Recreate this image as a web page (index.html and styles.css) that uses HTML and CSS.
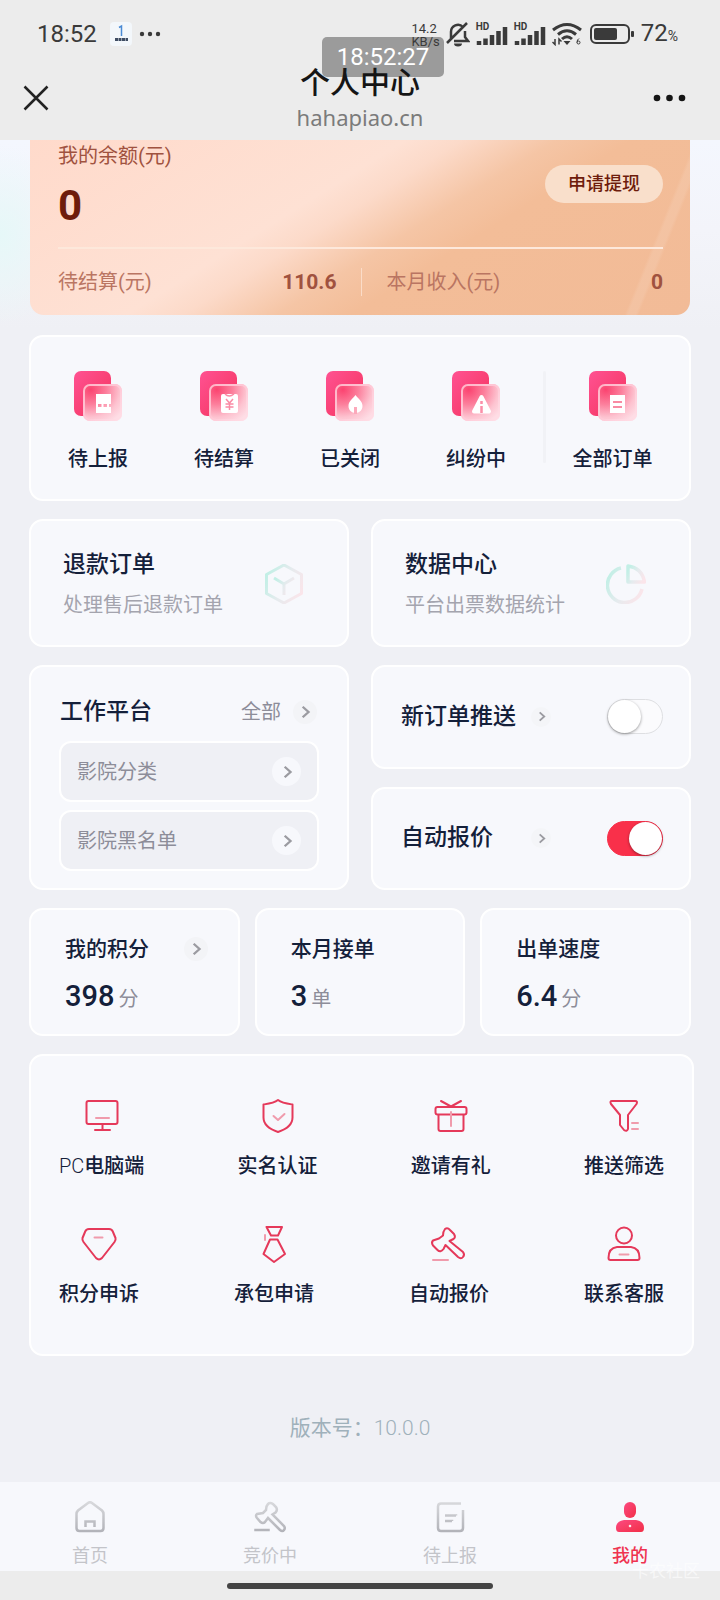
FILE: index.html
```html
<!DOCTYPE html>
<html lang="zh-CN">
<head>
<meta charset="utf-8">
<meta name="viewport" content="width=device-width, initial-scale=1">
<title>个人中心</title>
<link rel="stylesheet" href="styles.css">
</head>
<body>
<svg class="defs" width="0" height="0" aria-hidden="true">
  <defs>
    <linearGradient id="back" x1="0" y1="0" x2="1" y2="1"><stop offset="0" stop-color="#ff5292"/><stop offset="1" stop-color="#f4335c"/></linearGradient>
    <radialGradient id="front" cx="0.2" cy="0.15" r="1"><stop offset="0" stop-color="#fb4370"/><stop offset="0.4" stop-color="#fc7f9c"/><stop offset="0.75" stop-color="#fdc3d0"/><stop offset="1" stop-color="#fedde5"/></radialGradient>
    <linearGradient id="edge" x1="0" y1="0" x2="1" y2="1"><stop offset="0" stop-color="#ffb4c7"/><stop offset="1" stop-color="#ffdfe7"/></linearGradient>
    <linearGradient id="mint" x1="0" y1="0.3" x2="1" y2="0.8"><stop offset="0" stop-color="#c3efe6"/><stop offset="0.5" stop-color="#e6ebee"/><stop offset="1" stop-color="#fbe5ea"/></linearGradient>
    <linearGradient id="grey" gradientUnits="userSpaceOnUse" x1="0" y1="0" x2="0" y2="32"><stop offset="0" stop-color="#d9dadd"/><stop offset="1" stop-color="#b0b1b7"/></linearGradient>
    <linearGradient id="pink" x1="0" y1="0" x2="1" y2="1"><stop offset="0" stop-color="#fc4a82"/><stop offset="1" stop-color="#f22f46"/></linearGradient>
  </defs>
  <symbol id="chevron" viewBox="0 0 12 12"><path d="M4 1.500l5 4.500-5 4.500" fill="none" stroke="#9b9ba1" stroke-width="2"/></symbol>
  <symbol id="tile" viewBox="0 0 50 50">
    <rect x="1" width="37" height="45" rx="7" fill="url(#back)"/>
    <rect x="10" y="13" width="39" height="37" rx="7" fill="url(#front)"/>
    <rect x="11" y="14" width="37" height="35" rx="6" fill="none" stroke="url(#edge)" stroke-width="2"/>
  </symbol>
  <symbol id="signal" viewBox="0 0 32 22">
    <path d="M3 17v4M9.500 14.500V21M16 11V21M22.500 7V21M29 3V21" stroke="#3a3a3a" stroke-width="4.500"/>
  </symbol>
</svg>

<header class="top">
  <div class="status">
    <time class="clock">18:52</time>
    <svg width="24" height="24" viewBox="0 0 24 24" aria-hidden="true"><rect x="1" width="22" height="24" rx="4" fill="#f3f7fb"/><path d="M10 5.500l2.500-1.500v10" fill="none" stroke="#4a8ad4" stroke-width="1.500"/><path d="M6 17.500h13" stroke="#3f4d63" stroke-width="3" stroke-dasharray="3 .5"/></svg>
    <svg width="22" height="6" viewBox="0 0 22 6" aria-hidden="true"><g fill="#3a3a3a"><circle cx="3" cy="3" r="2.200"/><circle cx="11" cy="3" r="2.200"/><circle cx="19" cy="3" r="2.200"/></g></svg>
    <span class="speed">14.2<br>KB/s</span>
    <svg width="24" height="26" viewBox="0 0 24 26" aria-hidden="true"><g fill="none" stroke="#3a3a3a" stroke-width="2.500"><path d="M5 18V11a7 7 0 0 1 12-5M19 10v6l3 4H8M1 22L21 2"/></g><path d="M8 22.500h8a4 3 0 0 1-8 0z" fill="#3a3a3a"/></svg>
    <span class="cell"><b>HD</b><svg width="32" height="22" aria-hidden="true"><use href="#signal"/></svg></span>
    <span class="cell"><b>HD</b><svg width="32" height="22" aria-hidden="true"><use href="#signal"/></svg></span>
    <svg width="30" height="24" viewBox="0 0 30 24" aria-hidden="true"><g fill="none" stroke="#3a3a3a" stroke-width="3"><path d="M1 8Q15-3 29 8M6 12.500Q15 5 24 12.500M10 17Q15 12.500 20 17"/></g><path d="M11.500 19h7L15 23z" fill="#3a3a3a"/><path d="M3 17v5.500L.5 20M7 22.500V17l2.500 2.500" fill="none" stroke="#3a3a3a" stroke-width="1.500"/><circle cx="26.500" cy="20.500" r="1.500" fill="none" stroke="#3a3a3a"/><path d="M25 20.500q0-3 2-4" fill="none" stroke="#3a3a3a"/></svg>
    <svg class="cellpack" width="45" height="20" viewBox="0 0 45 20" aria-hidden="true"><rect x="1" y="1" width="38" height="18" rx="5" fill="none" stroke="#3a3a3a" stroke-width="2"/><rect x="4" y="4" width="23" height="12" rx="2" fill="#3a3a3a"/><rect x="41" y="7" width="3" height="6" rx="1" fill="#3a3a3a"/></svg>
    <span class="battery">72<small>%</small></span>
  </div>
  <div class="overlay-clock">18:52:27</div>
  <div class="navbar">
    <button class="icon-btn" aria-label="关闭"><svg width="26" height="26" viewBox="0 0 26 26"><path d="M1.500 1.500l23 23M24.500 1.500l-23 23" stroke="#222" stroke-width="2.500"/></svg></button>
    <div class="heading"><h1>个人中心</h1><p>hahapiao.cn</p></div>
    <button class="icon-btn more" aria-label="更多"><svg width="34" height="8" viewBox="0 0 34 8"><g fill="#151515"><circle cx="4" cy="4" r="3.300"/><circle cx="16.500" cy="4" r="3.300"/><circle cx="29" cy="4" r="3.300"/></g></svg></button>
  </div>
</header>

<main class="page">
  <section class="balance">
    <div class="balance-main">
      <div><p class="balance-label">我的余额(元)</p><p class="balance-sum">0</p></div>
      <button class="withdraw">申请提现</button>
    </div>
    <dl class="balance-sub">
      <div><dt>待结算(元)</dt><dd>110.6</dd></div>
      <div><dt>本月收入(元)</dt><dd>0</dd></div>
    </dl>
  </section>

  <nav class="card orders" aria-label="订单">
    <a href="#"><svg width="50" height="50"><use href="#tile"/><path d="M23 23h15v10H23zM23 36h15v6H23z" fill="#fff"/><path d="M23 34.500h15" stroke="#fff" stroke-width="3" stroke-dasharray="2 3.500"/></svg>待上报</a>
    <a href="#"><svg width="50" height="50"><use href="#tile"/><rect x="22" y="23" width="17" height="19" rx="2" fill="#fff"/><path d="M26 23q4 4 9 0M27 28l3.500 4 3.500-4M26.500 33h8M26.500 36h8M30.500 32v7" fill="none" stroke="#fa8ba5" stroke-width="1.500"/></svg>待结算</a>
    <a href="#"><svg width="50" height="50"><use href="#tile"/><path d="M30.500 24c3 4 7 6 7 11 0 4-3 7-7 7s-7-3-7-7c0-5 4-7 7-11z" fill="#fff"/><path d="M30.500 36v7" stroke="#fca9bb" stroke-width="3"/></svg>已关闭</a>
    <a href="#"><svg width="50" height="50"><use href="#tile"/><path d="M30.500 26l7.500 14.500H23z" fill="#fff" stroke="#fff" stroke-width="4" stroke-linejoin="round"/><path d="M30.500 30v3M30.500 35v7" stroke="#fb8fa8" stroke-width="2.500"/></svg>纠纷中</a>
    <i class="divider"></i>
    <a href="#" class="all"><svg width="50" height="50"><use href="#tile"/><path d="M22 24h15v18H22z" fill="#fff"/><path d="M25 31h9M25 36h9" stroke="#f88ba3" stroke-width="2"/></svg>全部订单</a>
  </nav>

  <div class="pair">
    <a href="#" class="card feature">
      <span><strong>退款订单</strong><em>处理售后退款订单</em></span>
      <svg width="40" height="40" viewBox="0 0 40 40" aria-hidden="true"><g fill="none" stroke="url(#mint)" stroke-width="3" stroke-linejoin="round"><path d="M20 1l17.500 9.500v19L20 39 2.500 29.500v-19z"/><path d="M10 14l10 6 10-6M20 20v11"/></g></svg>
    </a>
    <a href="#" class="card feature">
      <span><strong>数据中心</strong><em>平台出票数据统计</em></span>
      <svg width="40" height="40" viewBox="0 0 40 40" aria-hidden="true"><g fill="none" stroke="url(#mint)" stroke-width="3.500" stroke-linejoin="round"><path d="M15 4A17.500 17.500 0 1 0 36 25"/><path d="M22 2v16h16.500Q36 4 22 2z"/></g></svg>
    </a>
  </div>

  <div class="pair">
    <section class="card work">
      <div class="work-head"><h2>工作平台</h2><a href="#">全部<span class="dot"><svg><use href="#chevron"/></svg></span></a></div>
      <a href="#" class="work-row">影院分类<span class="dot big"><svg><use href="#chevron"/></svg></span></a>
      <a href="#" class="work-row">影院黑名单<span class="dot big"><svg><use href="#chevron"/></svg></span></a>
    </section>
    <div class="stack">
      <div class="card toggle"><label for="push">新订单推送</label><span class="dot small"><svg><use href="#chevron"/></svg></span><input id="push" type="checkbox" role="switch"></div>
      <div class="card toggle"><label for="quote">自动报价</label><span class="dot small"><svg><use href="#chevron"/></svg></span><input id="quote" type="checkbox" role="switch" checked></div>
    </div>
  </div>

  <div class="stats">
    <section class="card stat"><h3>我的积分<span class="dot"><svg><use href="#chevron"/></svg></span></h3><p><b>398</b>分</p></section>
    <section class="card stat"><h3>本月接单</h3><p><b>3</b>单</p></section>
    <section class="card stat"><h3>出单速度</h3><p><b>6.4</b>分</p></section>
  </div>

  <nav class="card services" aria-label="服务">
    <div class="service-row">
      <a href="#"><svg viewBox="0 0 36 36"><rect x="2.500" y="4" width="31" height="23" rx="2"/><path d="M18.500 27v6M11 33h15"/><path class="soft" d="M12 21h13"/></svg><span><i class="latin">PC</i>电脑端</span></a>
      <a href="#"><svg viewBox="0 0 36 36"><path d="M18 3c4 3 8 3.500 14.500 4.500v13c0 7-7 12-14.500 14.500C10.500 32.500 3.500 27.500 3.500 20.500v-13C10 6.500 14 6 18 3z"/><path class="soft" d="M13.500 19l4.500 4 6.500-6"/></svg>实名认证</a>
      <a href="#"><svg viewBox="0 0 36 36"><rect x="2.500" y="10" width="31" height="7.500" rx="2"/><path d="M5.500 18v14q0 2 2 2h21q2 0 2-2V18M8 4l10 5.500L28 4"/><path class="soft" d="M18 15v14"/></svg>邀请有礼</a>
      <a href="#"><svg viewBox="0 0 36 36"><path d="M6 4h23q3 0 1.500 3L22 18v14q-1 3-4 1l-4-5V18L5 7Q3.500 4 6 4z"/><path class="soft" d="M26 26h6M26 32h6"/></svg>推送筛选</a>
    </div>
    <div class="service-row">
      <a href="#"><svg viewBox="0 0 36 36"><path d="M8 4h20q3 0 4 3l2.500 6q.5 2-1 4L21 33q-3 3-6 0L2.500 17q-1.500-2-1-4L4 7q1-3 4-3z"/><path class="soft" d="M13.500 12.500h8"/></svg>积分申诉</a>
      <a href="#"><svg viewBox="0 0 36 36"><path d="M10.500 2h15.500l-4 8.500h-7zM14 14.500h7.500L29 29l-11 8L7.500 29z"/><path class="soft" d="M9 10v5"/></svg>承包申请</a>
      <a href="#"><svg viewBox="0 0 36 36"><path d="M14 4q2.500-2 5 1l4 4q2 3-.5 5l-4 2L32 27q2 2.500 0 5t-5 0L14.500 20l-2 4q-3 4-6 1L2 20.500q-2-3 0-5l6-2 4-3q0-4 2-6.500z"/><path class="soft" d="M2 35h15"/></svg>自动报价</a>
      <a href="#"><svg viewBox="0 0 36 36"><circle cx="18" cy="10.500" r="8"/><path d="M11 22h14q8.500 1 8.500 11 0 2-2 2h-27q-2 0-2-2 0-10 8.500-11z"/><path class="soft" d="M13.500 29.500h9"/></svg>联系客服</a>
    </div>
  </nav>

  <p class="version">版本号：<span>10.0.0</span></p>
</main>

<nav class="tabs" aria-label="主导航">
  <a href="#"><svg viewBox="0 0 32 32"><path d="M2.500 13q0-2 1.500-3.500L14 2q2-1.500 4 0l10 7.500q1.500 1.500 1.500 3.500v14q0 3-3 3h-21q-3 0-3-3z"/><path d="M11.500 26v-5.500h9V26"/></svg>首页</a>
  <a href="#"><svg viewBox="0 0 32 32"><path d="M14 3q2-2 5 0l3 3q2 3-.5 5.500l-3 2L30 25q1.500 2 0 4t-4 0L14 17l-3 4q-2 2-4.500 0L3 17q-2-2.500 0-4l6-1 3-3q0-4 2-6z"/><path d="M1 28.500h14v1H1z" class="bar"/></svg>竞价中</a>
  <a href="#"><svg viewBox="0 0 32 32"><path d="M27 2.500H7q-3 0-3 3V27q0 3 3 3h19q3 0 3-3V9"/><path d="M11 14.500h11v.1M11 20h7v.1"/></svg>待上报</a>
  <a href="#" class="active" aria-current="page"><svg viewBox="0 0 32 32"><rect x="10" y="1" width="12" height="16" rx="6"/><path d="M10 19h12q8 1 8 8 0 4-3 4H5q-3 0-3-4 0-7 8-8z"/><path d="M16 23.500l1.500 1.500-1.500 1.500-1.500-1.500z" class="hole"/></svg>我的</a>
</nav>
<footer class="gesture"><i></i><span class="mark">卡农社区</span></footer>
</body>
</html>
```

FILE: styles.css
```css
* { box-sizing: border-box; margin: 0; }

body {
  min-height: 100vh;
  display: flex;
  flex-direction: column;
  background: #eff0f5;
  color: #14203a;
  font: 20px/28px Roboto, "Noto Sans CJK SC", sans-serif;
}

a { color: inherit; text-decoration: none; }
button { border: 0; padding: 0; background: none; font: inherit; }
svg { display: block; flex: none; }
em, i { font-style: normal; }
.defs { position: absolute; }

/* status bar and title */
.top { position: relative; background: #ececec; }
.status {
  display: flex;
  align-items: center;
  gap: 6px;
  height: 60px;
  padding: 8px 42px 0 37px;
  color: #3a3a3a;
}
.clock { font-size: 24px; margin-right: 6px; }
.speed {
  position: relative;
  z-index: 1;
  margin-left: auto;
  padding-top: 2px;
  font: 13px/13px Roboto, sans-serif;
}
.cell { position: relative; padding-top: 2px; }
.cell b { position: absolute; left: 0; top: 0; font-size: 10px; line-height: 10px; }
.cellpack { margin-left: 2px; }
.battery { font-size: 24px; }
.battery small { font-size: 14px; }
.overlay-clock {
  position: absolute;
  left: 50%;
  top: 37px;
  width: 122px;
  margin-left: -38px;
  border-radius: 5px;
  background: #9b9b9b;
  color: #fff;
  font-size: 24px;
  line-height: 40px;
  text-align: center;
}
.navbar {
  position: relative;
  display: grid;
  grid-template-columns: 1fr auto 1fr;
  align-items: center;
  height: 80px;
  padding: 0 33px 5px 23px;
}
.icon-btn { justify-self: start; }
.more { justify-self: end; }
.heading { text-align: center; padding: 3px 0 0 10px; }
.heading h1 { font-size: 30px; line-height: 36px; font-weight: 500; color: #151515; }
.heading p { font: 22px/32px "Noto Sans", sans-serif; color: #7b7b7b; }

/* page body */
.page {
  flex: 1;
  display: flex;
  flex-direction: column;
  gap: 18px;
  padding: 0 29px;
  background:
    radial-gradient(70px 90px at 0 95px, #e6f8f8, transparent),
    linear-gradient(to bottom, #f4f7fe 0, #f3f4fa 90px, #eff0f5 190px);
}
.card {
  border: 2px solid #fff;
  border-radius: 14px;
  background: #f7f8fc;
}

.balance {
  margin: 0 1px 2px;
  padding: 0 27px 0 28px;
  border-radius: 0 0 14px 14px;
  color: #a0523f;
  background:
    linear-gradient(112deg, transparent 91%, #ffffff1c 91.5%, #ffffff1c 92.5%, transparent 93%),
    linear-gradient(148deg, #ffdacb 0%, #fee1d4 40%, #fcdac9 46%, #f5c5a5 56%, #f3bd98 64%, #f2bb97 100%);
}
.balance-main {
  display: flex;
  justify-content: space-between;
  align-items: center;
  height: 109px;
  border-bottom: 2px solid #fde8db;
}
.balance-label { padding-top: 2px; line-height: 28px; }
.balance-sum { margin: 14px 0 20px; font-size: 42px; line-height: 44px; font-weight: 700; color: #6e1c0c; }
.withdraw {
  width: 118px;
  height: 38px;
  margin-bottom: 20px;
  border-radius: 19px;
  background: #f9dfcb;
  color: #6e1c0c;
  font-size: 18px;
  font-weight: 500;
}
.balance-sub { display: grid; grid-template-columns: 1fr 1fr; height: 66px; align-items: center; }
.balance-sub div { display: flex; justify-content: space-between; padding-right: 24px; }
.balance-sub div + div { padding: 0 0 0 25px; border-left: 1px solid #fbdcc8; }
.balance-sub dt { color: #ba7562; }
.balance-sub dd { font-size: 21px; font-weight: 700; }

.orders { display: flex; padding: 34px 10px 26px 4px; }
.orders a {
  flex: 126 1 0;
  display: flex;
  flex-direction: column;
  align-items: center;
  gap: 24px;
}
.orders .all { flex-grow: 133; }
.divider { width: 3px; height: 92px; margin-left: 4px; border-radius: 2px; background: #f1f2f6; }

.pair { display: grid; grid-template-columns: 1fr 1fr; gap: 22px; }
.feature {
  display: flex;
  align-items: center;
  justify-content: space-between;
  padding: 28px 43px 26px 32px;
}
.feature strong, .feature em { display: block; }
.feature strong { margin-bottom: 10px; font-size: 23px; line-height: 32px; font-weight: 500; }
.feature em { color: #a4a4ae; }

.dot {
  display: grid;
  place-items: center;
  width: 24px;
  height: 24px;
  border-radius: 50%;
  background: #f3f4f7;
}
.dot svg { width: 14px; height: 14px; }
.dot.big { width: 29px; height: 29px; background: #f7f8fc; }
.dot.small { width: 20px; height: 20px; background: #f4f5f8; }
.dot.small svg { width: 11px; height: 11px; }

.work { padding: 29px 28px 17px; display: grid; gap: 8px; }
.work-head { display: flex; justify-content: space-between; align-items: center; padding: 0 2px 5px 1px; }
.work-head h2 { font-size: 23px; line-height: 32px; font-weight: 500; }
.work-head a { display: flex; align-items: center; gap: 12px; color: #8d8d99; }
.work-row {
  display: flex;
  align-items: center;
  justify-content: space-between;
  height: 61px;
  padding: 0 16px;
  border: 2px solid #fff;
  border-radius: 12px;
  background: #eff0f5;
  color: #8d8d99;
}

.stack { display: grid; gap: 18px; }
.toggle { display: flex; align-items: center; gap: 15px; padding: 0 26px 0 28px; }
.toggle label { min-width: 115px; font-size: 23px; line-height: 32px; font-weight: 500; }
.toggle input {
  appearance: none;
  width: 56px;
  height: 35px;
  margin: 0 0 0 auto;
  border: 1px solid #dedfe2;
  border-radius: 18px;
  background: #fbfbfd;
}
.toggle input::before {
  content: "";
  display: block;
  width: 33px;
  height: 33px;
  border-radius: 50%;
  background: #fff;
  box-shadow: 0 1px 3px #00000066;
}
.toggle input:checked { border-color: #f9304a; background: #f9304a; }
.toggle input:checked::before { margin-left: auto; }

.stats { display: grid; grid-template-columns: repeat(3, 1fr); gap: 15px; }
.stat { padding: 25px 30px 17px 34px; }
.stat h3 {
  display: flex;
  align-items: center;
  justify-content: space-between;
  margin-bottom: 15px;
  font-size: 21px;
  line-height: 28px;
  font-weight: 500;
}
.stat p { line-height: 36px; color: #8d8d99; }
.stat b { margin-right: 4px; font-size: 29px; font-weight: 500; color: #14203a; }

.services { margin-right: -3px; padding: 41px 28px 46px; display: grid; gap: 45px; }
.service-row { display: flex; justify-content: space-between; }
.service-row a { display: flex; flex-direction: column; align-items: center; gap: 19px; }
.service-row svg {
  width: 36px;
  height: 36px;
  overflow: visible;
  fill: none;
  stroke: #e5395a;
  stroke-width: 2;
  stroke-linejoin: round;
  stroke-linecap: round;
}
.service-row .soft { stroke: #f09bac; }
.latin { font-weight: 300; }
.orders a, .service-row a { font-weight: 500; }

.version { margin: auto; font-size: 21px; color: #9fb1bb; }
.version span { font-weight: 300; }

/* bottom navigation */
.tabs { display: grid; grid-template-columns: repeat(4, 1fr); padding: 19px 0 1px; background: #f7f8fc; }
.tabs a {
  display: flex;
  flex-direction: column;
  align-items: center;
  gap: 9px;
  font-size: 18px;
  color: #c3c4c9;
}
.tabs svg { width: 32px; height: 32px; fill: none; stroke: url(#grey); stroke-width: 2.5; }
.tabs .bar { stroke-width: 1.5; }
.tabs .active { color: #ef3350; font-weight: 500; }
.tabs .active svg { fill: url(#pink); stroke: none; }
.tabs .active .hole { fill: #fff; }

.gesture { position: relative; height: 29px; padding-top: 12px; background: #ececec; }
.gesture i { display: block; width: 37%; height: 6px; margin: 0 auto; border-radius: 3px; background: #444; }
.mark { position: absolute; right: 20px; top: -14px; font-size: 17px; color: #ffffff99; }
```
